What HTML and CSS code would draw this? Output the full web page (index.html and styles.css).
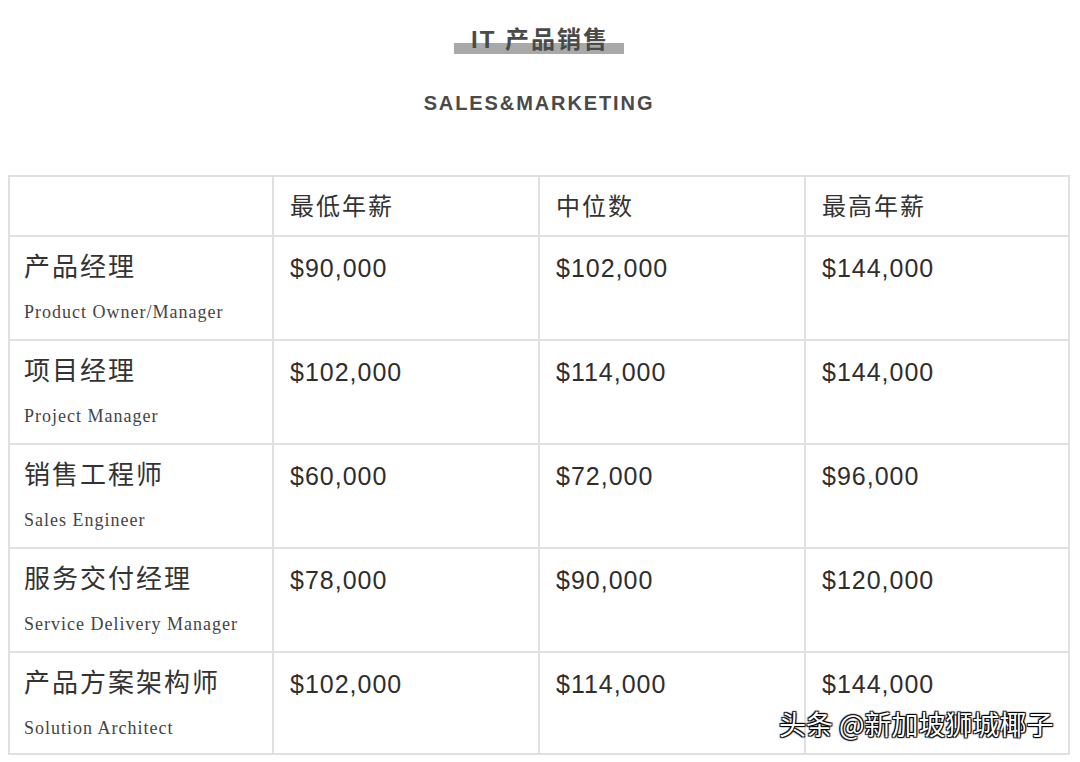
FILE: index.html
```html
<!DOCTYPE html>
<html lang="zh">
<head>
<meta charset="utf-8">
<link rel="stylesheet" href="styles.css">
</head>
<body>
<div class="page">
  <header class="head">
    <h1 class="title"><span class="title-text">IT 产品销售</span></h1>
    <h2 class="subtitle">SALES&amp;MARKETING</h2>
  </header>
  <table class="salary">
    <colgroup>
      <col class="c1"><col class="c2"><col class="c3"><col class="c4">
    </colgroup>
    <thead>
      <tr class="hrow">
        <th></th><th>最低年薪</th><th>中位数</th><th>最高年薪</th>
      </tr>
    </thead>
    <tbody>
      <tr>
        <td><div class="zh">产品经理</div><div class="en">Product Owner/Manager</div></td>
        <td class="num">$90,000</td><td class="num">$102,000</td><td class="num">$144,000</td>
      </tr>
      <tr>
        <td><div class="zh">项目经理</div><div class="en">Project Manager</div></td>
        <td class="num">$102,000</td><td class="num">$114,000</td><td class="num">$144,000</td>
      </tr>
      <tr>
        <td><div class="zh">销售工程师</div><div class="en">Sales Engineer</div></td>
        <td class="num">$60,000</td><td class="num">$72,000</td><td class="num">$96,000</td>
      </tr>
      <tr>
        <td><div class="zh">服务交付经理</div><div class="en">Service Delivery Manager</div></td>
        <td class="num">$78,000</td><td class="num">$90,000</td><td class="num">$120,000</td>
      </tr>
      <tr>
        <td><div class="zh">产品方案架构师</div><div class="en">Solution Architect</div></td>
        <td class="num">$102,000</td><td class="num">$114,000</td><td class="num">$144,000</td>
      </tr>
    </tbody>
  </table>
  <div class="watermark">头条 @新加坡狮城椰子</div>
</div>
</body>
</html>
```
FILE: styles.css
```css
* { box-sizing: border-box; }
html, body { margin: 0; padding: 0; background: #fff; }
body {
  font-family: "Liberation Sans", "Noto Sans CJK SC", sans-serif;
  color: #333;
}
.page {
  position: relative;
  width: 1080px;
  height: 762px;
  padding: 24px 10px 0 8px;
}
.head { text-align: center; }
.title {
  margin: 0;
  font-size: 24px;
  line-height: 32px;
  font-weight: bold;
  color: #4a4a4a;
  letter-spacing: 2px;
}
.title-text {
  display: inline-block;
  padding: 0 15px 0 17px;
  background: linear-gradient(to bottom, transparent 58%, #a9a9a9 58%, #a9a9a9 95%, transparent 95%);
}
.subtitle {
  margin: 35px 0 0;
  font-size: 20px;
  line-height: 24px;
  font-weight: bold;
  color: #4a4a4a;
  letter-spacing: 1.9px;
}
.salary {
  margin-top: 60px;
  width: 1060px;
  border-collapse: collapse;
  table-layout: fixed;
}
.c1 { width: 264px; }
.c2 { width: 266px; }
.c3 { width: 266px; }
.c4 { width: 264px; }
.salary th, .salary td {
  border: 2px solid #e0e0e0;
  text-align: left;
  vertical-align: top;
  padding: 0 0 0 16px;
}
.salary td:first-child { padding-left: 14px; }
.hrow th {
  height: 60px;
  vertical-align: middle;
  font-family: "Noto Sans CJK SC", sans-serif;
  font-weight: normal;
  font-size: 24px;
  letter-spacing: 2px;
  color: #333;
  padding-bottom: 4px;
}
.salary tbody tr { height: 104px; }
.salary tbody tr:last-child { height: 102px; }
.zh {
  font-family: "Noto Sans CJK SC", sans-serif;
  font-size: 26px;
  line-height: 34px;
  letter-spacing: 2px;
  color: #333;
  margin-top: 11px;
}
.en {
  font-family: "Liberation Serif", serif;
  font-size: 18px;
  line-height: 22px;
  letter-spacing: 1px;
  color: #444;
  margin-top: 19px;
}
.salary td.num {
  font-family: "Liberation Sans", sans-serif;
  font-weight: normal;
  font-size: 25px;
  line-height: 30px;
  color: #2e2e2e;
  padding-top: 16px;
  letter-spacing: 1px;
}
.watermark {
  position: absolute;
  left: 779px;
  top: 706px;
  font-family: "Noto Sans CJK SC", sans-serif;
  font-size: 27px;
  line-height: 36px;
  color: #fff;
  text-shadow: 0 0 1px #000, 1px 1px 1px #000, -1px -1px 1px #000, 1px -1px 1px #000, -1px 1px 1px #000;
}
```
